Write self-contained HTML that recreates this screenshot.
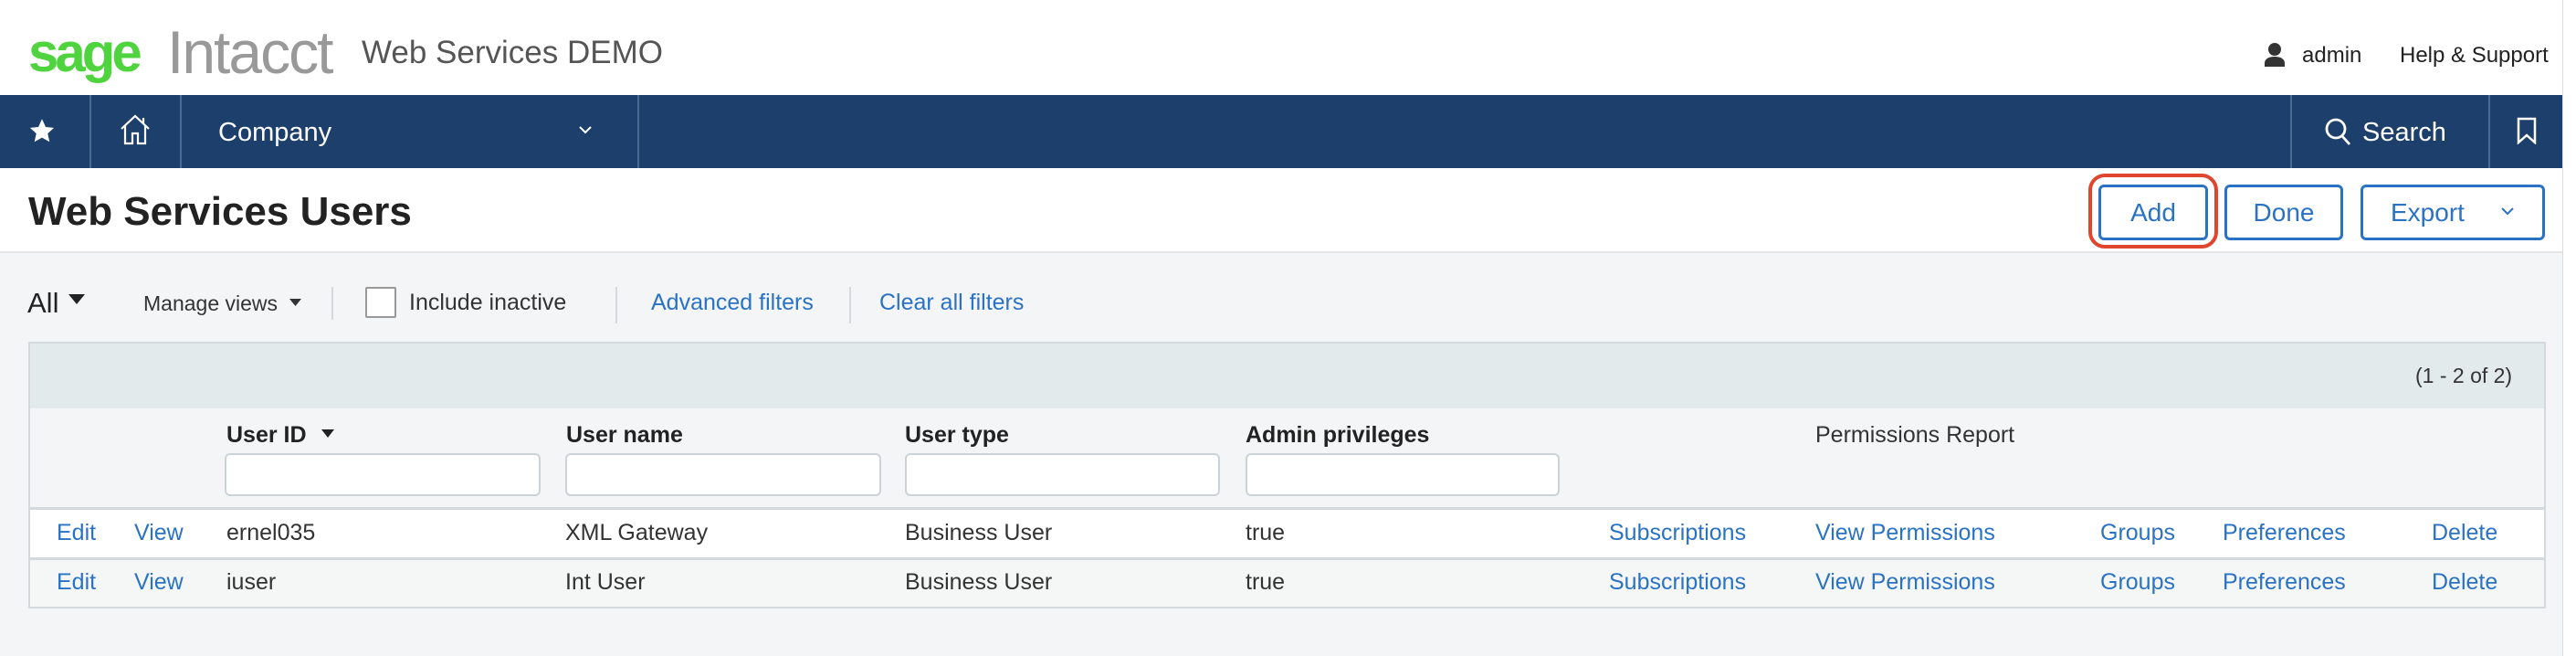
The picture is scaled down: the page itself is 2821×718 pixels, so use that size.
<!DOCTYPE html>
<html><head><meta charset="utf-8"><style>
*{margin:0;padding:0;box-sizing:border-box}
body{width:2821px;height:718px;background:#f3f5f7;font-family:"Liberation Sans",Arial,sans-serif;position:relative;overflow:hidden;color:#333}
.a{position:absolute;white-space:nowrap}
.lnk{color:#2a72c4}
.t{font-size:25px;line-height:25px}
</style></head><body>
<div class="a" style="left:0;top:0;width:2806px;height:276px;background:#fff"></div>
<div class="a" style="left:2806px;top:0;width:15px;height:718px;background:#fff;border-left:1px solid #ddd"></div>
<div class="a" style="left:31px;top:28px;font-size:60px;font-weight:bold;color:#4fd43f;letter-spacing:-4px;line-height:60px">sage</div>
<div class="a" style="left:183px;top:24px;font-size:66px;color:#999;letter-spacing:-2px;line-height:66px">Intacct</div>
<div class="a" style="left:396px;top:39px;font-size:35px;color:#555;line-height:37px">Web Services DEMO</div>
<svg class="a" style="left:2479px;top:47px" width="24" height="26" viewBox="0 0 24 26"><circle cx="12" cy="7" r="7" fill="#333"/><path d="M1 26v-4c0-4 4-7 11-7s11 3 11 7v4z" fill="#333"/></svg>
<div class="a" style="left:2521px;top:47px;font-size:24px;color:#222">admin</div>
<div class="a" style="left:2628px;top:47px;font-size:24px;color:#222">Help &amp; Support</div>
<div class="a" style="left:0;top:104px;width:2806px;height:80px;background:#1c406b"></div>
<div class="a" style="left:98px;top:104px;width:2px;height:80px;background:#4a6a90"></div>
<div class="a" style="left:197px;top:104px;width:2px;height:80px;background:#4a6a90"></div>
<div class="a" style="left:698px;top:104px;width:2px;height:80px;background:#4a6a90"></div>
<div class="a" style="left:2508px;top:104px;width:2px;height:80px;background:#4a6a90"></div>
<div class="a" style="left:2725px;top:104px;width:2px;height:80px;background:#4a6a90"></div>
<svg class="a" style="left:31px;top:129px" width="30" height="30" viewBox="0 0 24 24"><path d="M12 1l3.2 7 7.3.7-5.5 5 1.6 7.3L12 17.3 5.4 21l1.6-7.3-5.5-5 7.3-.7z" fill="#fff"/></svg>
<svg class="a" style="left:130px;top:124px" width="36" height="36" viewBox="0 0 36 36" fill="none" stroke="#fff" stroke-width="2.2"><path d="M3 17L18 3l15 14M7 14v19h8V22h6v11h8V14M27 5v6"/></svg>
<div class="a" style="left:239px;top:129px;font-size:29px;color:#fff">Company</div>
<svg class="a" style="left:633px;top:136px" width="16" height="12" viewBox="0 0 16 12" fill="none" stroke="#fff" stroke-width="2"><path d="M2 3l6 6 6-6"/></svg>
<svg class="a" style="left:2546px;top:129px" width="30" height="32" viewBox="0 0 30 32" fill="none" stroke="#fff" stroke-width="2.8"><circle cx="12" cy="12" r="10"/><path d="M19 20l8 9"/></svg>
<div class="a" style="left:2587px;top:129px;font-size:29px;color:#fff">Search</div>
<svg class="a" style="left:2756px;top:128px" width="22" height="30" viewBox="0 0 22 30" fill="none" stroke="#fff" stroke-width="2.5"><path d="M2 2h18v26l-9-8-9 8z"/></svg>
<div class="a" style="left:31px;top:207px;font-size:44px;font-weight:bold;color:#222">Web Services Users</div>
<div class="a" style="left:2287px;top:190px;width:142px;height:82px;border:4px solid #e0452e;border-radius:18px"></div>
<div class="a lnk" style="left:2298px;top:202px;width:120px;height:61px;border:3px solid #2a72c4;border-radius:6px;font-size:28px;text-align:center;line-height:55px">Add</div>
<div class="a lnk" style="left:2436px;top:202px;width:130px;height:61px;border:3px solid #2a72c4;border-radius:6px;font-size:28px;text-align:center;line-height:55px">Done</div>
<div class="a lnk" style="left:2585px;top:202px;width:202px;height:61px;border:3px solid #2a72c4;border-radius:6px;font-size:28px;line-height:55px;padding-left:30px">Export</div>
<svg class="a" style="left:2738px;top:225px" width="16" height="12" viewBox="0 0 16 12" fill="none" stroke="#2a72c4" stroke-width="2"><path d="M2 3l6 6 6-6"/></svg>
<div class="a" style="left:0;top:275px;width:2806px;height:2px;background:#e2e6e9"></div>
<div class="a" style="left:30px;top:314px;font-size:31px;color:#222">All</div>
<svg class="a" style="left:75px;top:322px" width="18" height="12"><path d="M0 0h18L9 11z" fill="#222"/></svg>
<div class="a" style="left:157px;top:319px;font-size:23px;color:#333">Manage views</div>
<svg class="a" style="left:317px;top:327px" width="13" height="9"><path d="M0 0h13L6.5 8z" fill="#333"/></svg>
<div class="a" style="left:363px;top:314px;width:2px;height:36px;background:#d5d9dc"></div>
<div class="a" style="left:400px;top:314px;width:34px;height:34px;border:2px solid #999;background:#fff;border-radius:2px"></div>
<div class="a" style="left:448px;top:317px;font-size:25px;color:#333">Include inactive</div>
<div class="a" style="left:674px;top:314px;width:2px;height:40px;background:#d5d9dc"></div>
<div class="a lnk" style="left:713px;top:317px;font-size:25px">Advanced filters</div>
<div class="a" style="left:930px;top:314px;width:2px;height:40px;background:#d5d9dc"></div>
<div class="a lnk" style="left:963px;top:317px;font-size:25px">Clear all filters</div>
<div class="a" style="left:31px;top:374px;width:2757px;height:292px;border:2px solid #d3d9dc;background:#f3f5f7"></div>
<div class="a" style="left:33px;top:376px;width:2753px;height:71px;background:#e3eaec"></div>
<div class="a" style="left:2645px;top:398px;font-size:23px;color:#333">(1 - 2 of 2)</div>
<div class="a" style="left:248px;top:462px;font-size:25px;font-weight:bold;color:#222">User ID</div>
<svg class="a" style="left:352px;top:470px" width="14" height="10"><path d="M0 0h14L7 9z" fill="#222"/></svg>
<div class="a" style="left:620px;top:462px;font-size:25px;font-weight:bold;color:#222">User name</div>
<div class="a" style="left:991px;top:462px;font-size:25px;font-weight:bold;color:#222">User type</div>
<div class="a" style="left:1364px;top:462px;font-size:25px;font-weight:bold;color:#222">Admin privileges</div>
<div class="a" style="left:1988px;top:462px;font-size:25px;color:#333">Permissions Report</div>
<div class="a" style="left:246px;top:496px;width:346px;height:47px;background:#fff;border:2px solid #ccd3d6;border-radius:6px"></div>
<div class="a" style="left:619px;top:496px;width:346px;height:47px;background:#fff;border:2px solid #ccd3d6;border-radius:6px"></div>
<div class="a" style="left:991px;top:496px;width:345px;height:47px;background:#fff;border:2px solid #ccd3d6;border-radius:6px"></div>
<div class="a" style="left:1364px;top:496px;width:344px;height:47px;background:#fff;border:2px solid #ccd3d6;border-radius:6px"></div>
<div class="a" style="left:33px;top:555px;width:2753px;height:3px;background:#d3d9dc"></div>
<div class="a" style="left:33px;top:558px;width:2753px;height:52px;background:#fff"></div>
<div class="a" style="left:33px;top:610px;width:2753px;height:3px;background:#d3d9dc"></div>
<div class="a" style="left:33px;top:613px;width:2753px;height:51px;background:#f5f7f7"></div>
<div class="a t lnk" style="left:62px;top:571px">Edit</div><div class="a t lnk" style="left:147px;top:571px">View</div>
<div class="a t" style="left:248px;top:571px">ernel035</div><div class="a t" style="left:619px;top:571px">XML Gateway</div>
<div class="a t" style="left:991px;top:571px">Business User</div><div class="a t" style="left:1364px;top:571px">true</div>
<div class="a t lnk" style="left:1762px;top:571px">Subscriptions</div><div class="a t lnk" style="left:1988px;top:571px">View Permissions</div>
<div class="a t lnk" style="left:2300px;top:571px">Groups</div><div class="a t lnk" style="left:2434px;top:571px">Preferences</div><div class="a t lnk" style="left:2663px;top:571px">Delete</div>
<div class="a t lnk" style="left:62px;top:625px">Edit</div><div class="a t lnk" style="left:147px;top:625px">View</div>
<div class="a t" style="left:248px;top:625px">iuser</div><div class="a t" style="left:619px;top:625px">Int User</div>
<div class="a t" style="left:991px;top:625px">Business User</div><div class="a t" style="left:1364px;top:625px">true</div>
<div class="a t lnk" style="left:1762px;top:625px">Subscriptions</div><div class="a t lnk" style="left:1988px;top:625px">View Permissions</div>
<div class="a t lnk" style="left:2300px;top:625px">Groups</div><div class="a t lnk" style="left:2434px;top:625px">Preferences</div><div class="a t lnk" style="left:2663px;top:625px">Delete</div>
</body></html>
